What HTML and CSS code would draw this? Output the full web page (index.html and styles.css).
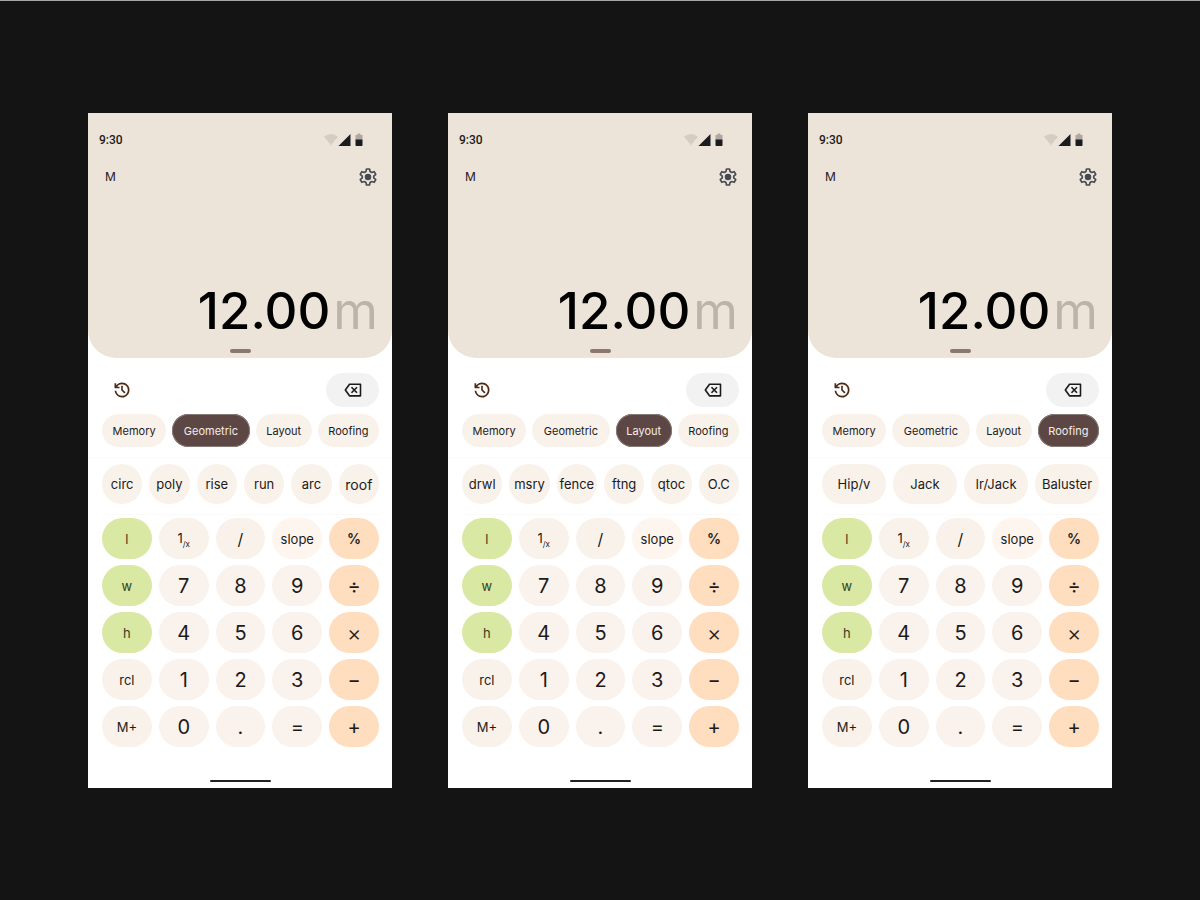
FILE: index.html
```
<!DOCTYPE html>
<html lang="en">
<head>
<meta charset="utf-8">
<meta name="viewport" content="width=device-width, initial-scale=1">
<title>Construction calculator</title>
<link rel="stylesheet" href="styles.css">
</head>
<body>
<svg class="defs" aria-hidden="true">
  <symbol id="status" viewBox="0 0 40 14">
    <path d="M0 3.6Q7 -1.6 14 3.6L7 12.2Z" fill="#d5cdc3"/>
    <path d="M26.500 1V13H14.500Z" fill="#1b1c20"/>
    <path d="M33.500 .5h3v1.400h2V7h-7V1.900h2Z" fill="#afa79f"/>
    <path d="M31.500 6.500h7v5.700a.8.8 0 0 1-.8.8h-5.400a.8.8 0 0 1-.8-.8Z" fill="#1b1c20"/>
  </symbol>
  <symbol id="gear" viewBox="0 0 24 24">
    <path d="M9.500 5.500 10.200 2.400h3.600l.7 3.100 1.900 1.100 3-1 1.900 3.200-2.400 2.100v2.200l2.400 2.100-1.900 3.200-3-1-1.900 1.100-.7 3.100h-3.600l-.7-3.100-1.900-1.100-3 1-1.900-3.200 2.400-2.100v-2.200L2.700 8.800l1.900-3.200 3 1Z" fill="none" stroke="#454a52" stroke-width="2" stroke-linejoin="round"/>
    <circle cx="12" cy="12" r="3.900" fill="#454a52"/>
  </symbol>
  <symbol id="history" viewBox="0 0 24 24">
    <path fill="#4e2a14" d="M12 21q-3.450 0-6.012-2.287T3.050 13H5.100q.35 2.600 2.313 4.300T12 19q2.925 0 4.963-2.037T19 12t-2.037-4.962T12 5q-1.725 0-3.225.8T6.250 8H9v2H3V4h2v2.350q1.275-1.600 3.113-2.475T12 3q1.875 0 3.513.713t2.850 1.925 1.925 2.850T21 12t-.712 3.513-1.925 2.850-2.850 1.925T12 21m2.800-4.800L11 12.400V7h2v4.600l3.200 3.200z"/>
  </symbol>
  <symbol id="backspace" viewBox="0 0 24 24">
    <path d="M7.800 5H21V19H7.800L2.800 12Z" fill="none" stroke="#1a1a1a" stroke-width="1.900" stroke-linejoin="round"/>
    <path d="M10.200 8.700l6.600 6.600 M16.800 8.700l-6.600 6.600" fill="none" stroke="#1a1a1a" stroke-width="1.900"/>
  </symbol>
</svg>
<main class="board" id="board"></main>
<script src="app.js"></script>
</body>
</html>
```
FILE: styles.css
```
* { box-sizing: border-box; }
body {
  margin: 0;
  min-height: 100vh;
  background: #141414;
  border-top: 1px solid #a3a7a5;
  border-bottom: 3px solid #0c060b;
  font-family: Inter, "Liberation Sans", sans-serif;
  color: #1c1b1a;
}
.defs { position: absolute; width: 0; height: 0; }
.board {
  display: grid;
  grid-template-columns: repeat(3, 1fr);
  gap: 56px;
  padding: 112px 88px;
}
.phone { background: #fff; display: flex; flex-direction: column; }
.display {
  background: #ece4d9;
  border-radius: 0 0 28px 28px;
  display: flex;
  flex-direction: column;
  height: 245px;
}
.status {
  display: flex;
  justify-content: space-between;
  align-items: center;
  padding: 20px 28px 0 11px;
  font: 500 12px/14px Roboto, sans-serif;
}
.status svg { width: 40px; height: 14px; display: block; }
.tools {
  display: flex;
  justify-content: space-between;
  align-items: center;
  padding: 20px 14px 0 17px;
  font-size: 12px;
  line-height: 20px;
}
button {
  border: 0;
  padding: 0;
  margin: 0;
  background: none;
  color: inherit;
  font: inherit;
  cursor: pointer;
}
.icon { display: grid; place-items: center; }
.icon svg { width: 20px; height: 20px; display: block; }
.result {
  display: flex;
  justify-content: flex-end;
  align-items: baseline;
  gap: 3px;
  margin-top: auto;
  padding: 0 14px;
  font-size: 51px;
  line-height: 64px;
  font-weight: 500;
  color: #000;
}
.unit { font-weight: 400; color: #bdb3ab; }
.handle {
  align-self: center;
  width: 21px;
  height: 4px;
  margin: 6px 0 5px;
  border-radius: 2px;
  background: #8b776d;
}
.edit {
  display: flex;
  justify-content: space-between;
  align-items: center;
  padding: 15px 13px 7px 24px;
}
.delete { width: 53px; height: 34px; border-radius: 17px; background: #f2f2f2; }
.tabs {
  display: grid;
  grid-template-columns: 64fr 77fr 56fr 61fr;
  gap: 6px;
  padding: 0 13px 10px 14px;
  border-bottom: 1px solid #fafafa;
}
.tab {
  height: 33px;
  border-radius: 17px;
  background: #f9f2eb;
  font-size: 11px;
}
.tab.active { background: #5d4744; color: #f5ecea; box-shadow: inset 0 0 0 1px #887a76; }
.functions {
  display: grid;
  grid-auto-flow: column;
  grid-auto-columns: 1fr;
  gap: 7px;
  margin: 0 13px 0 14px;
  padding: 6px 0 10px;
  border-bottom: 1px solid #fafafa;
}
.function { height: 40px; border-radius: 20px; background: #f9f2eb; font-size: 13px; }
.function.large { font-size: 14px; }
.keys {
  display: grid;
  grid-template-columns: repeat(5, 1fr);
  gap: 6px 7px;
  padding: 3px 13px 0 14px;
}
.key { height: 41px; border-radius: 21px; background: #f9f2ed; font-size: 20px; }
.key.word { background: #f9f2eb; font-size: 13px; }
.key.slash { background: #f9f2eb; font-size: 16px; }
.key.slope { background: #fdf5ee; font-size: 13px; }
.key.dimension { background: #d9e8a3; color: #37401c; font-size: 13px; }
.key.operator { background: #ffddbf; font-size: 20px; }
.key.times { background: #ffddbf; font-size: 22px; font-weight: 300; }
.key.percent { background: #ffddbf; font-size: 14px; font-weight: 600; }
.key sub { font-size: 8px; line-height: 8px; }
.home {
  align-self: center;
  width: 61px;
  height: 2px;
  margin: 33px 0 6px;
  border-radius: 1px;
  background: #222;
}
```
FILE: app.js
```
const tabs = ["Memory", "Geometric", "Layout", "Roofing"];
const screens = [
  { active: "Geometric", functions: ["circ", "poly", "rise", "run", "arc", "roof"] },
  { active: "Layout", functions: ["drwl", "msry", "fence", "ftng", "qtoc", "O.C"] },
  { active: "Roofing", functions: ["Hip/v", "Jack", "Ir/Jack", "Baluster"] }
];
const keys = [
  ["l", "dimension"], ["1<sub>/x</sub>", "word"], ["/", "slash"], ["slope", "slope"], ["%", "percent"],
  ["w", "dimension"], ["7", ""], ["8", ""], ["9", ""], ["÷", "operator"],
  ["h", "dimension"], ["4", ""], ["5", ""], ["6", ""], ["×", "times"],
  ["rcl", "word"], ["1", ""], ["2", ""], ["3", ""], ["−", "operator"],
  ["M+", "word"], ["0", ""], [".", ""], ["=", ""], ["+", "operator"]
];
const button = (cls, label) => `<button type="button" class="${cls}">${label}</button>`;
const icon = (cls, id, label) =>
  `<button type="button" class="icon ${cls}" aria-label="${label}"><svg><use href="#${id}"/></svg></button>`;

document.getElementById("board").innerHTML = screens.map(screen => `
  <section class="phone" aria-label="${screen.active} calculator">
    <header class="display">
      <div class="status"><span>9:30</span><svg aria-hidden="true"><use href="#status"/></svg></div>
      <div class="tools"><span>M</span>${icon("settings", "gear", "Settings")}</div>
      <div class="result"><span>12.00</span><span class="unit">m</span></div>
      <div class="handle"></div>
    </header>
    <div class="edit">${icon("history", "history", "History")}${icon("delete", "backspace", "Delete")}</div>
    <nav class="tabs">${tabs.map(t => button(t === screen.active ? "tab active" : "tab", t)).join("")}</nav>
    <div class="functions">${screen.functions.map(f => button(f === "roof" ? "function large" : "function", f)).join("")}</div>
    <div class="keys">${keys.map(([label, kind]) => button("key " + kind, label)).join("")}</div>
    <div class="home"></div>
  </section>`).join("");
```
